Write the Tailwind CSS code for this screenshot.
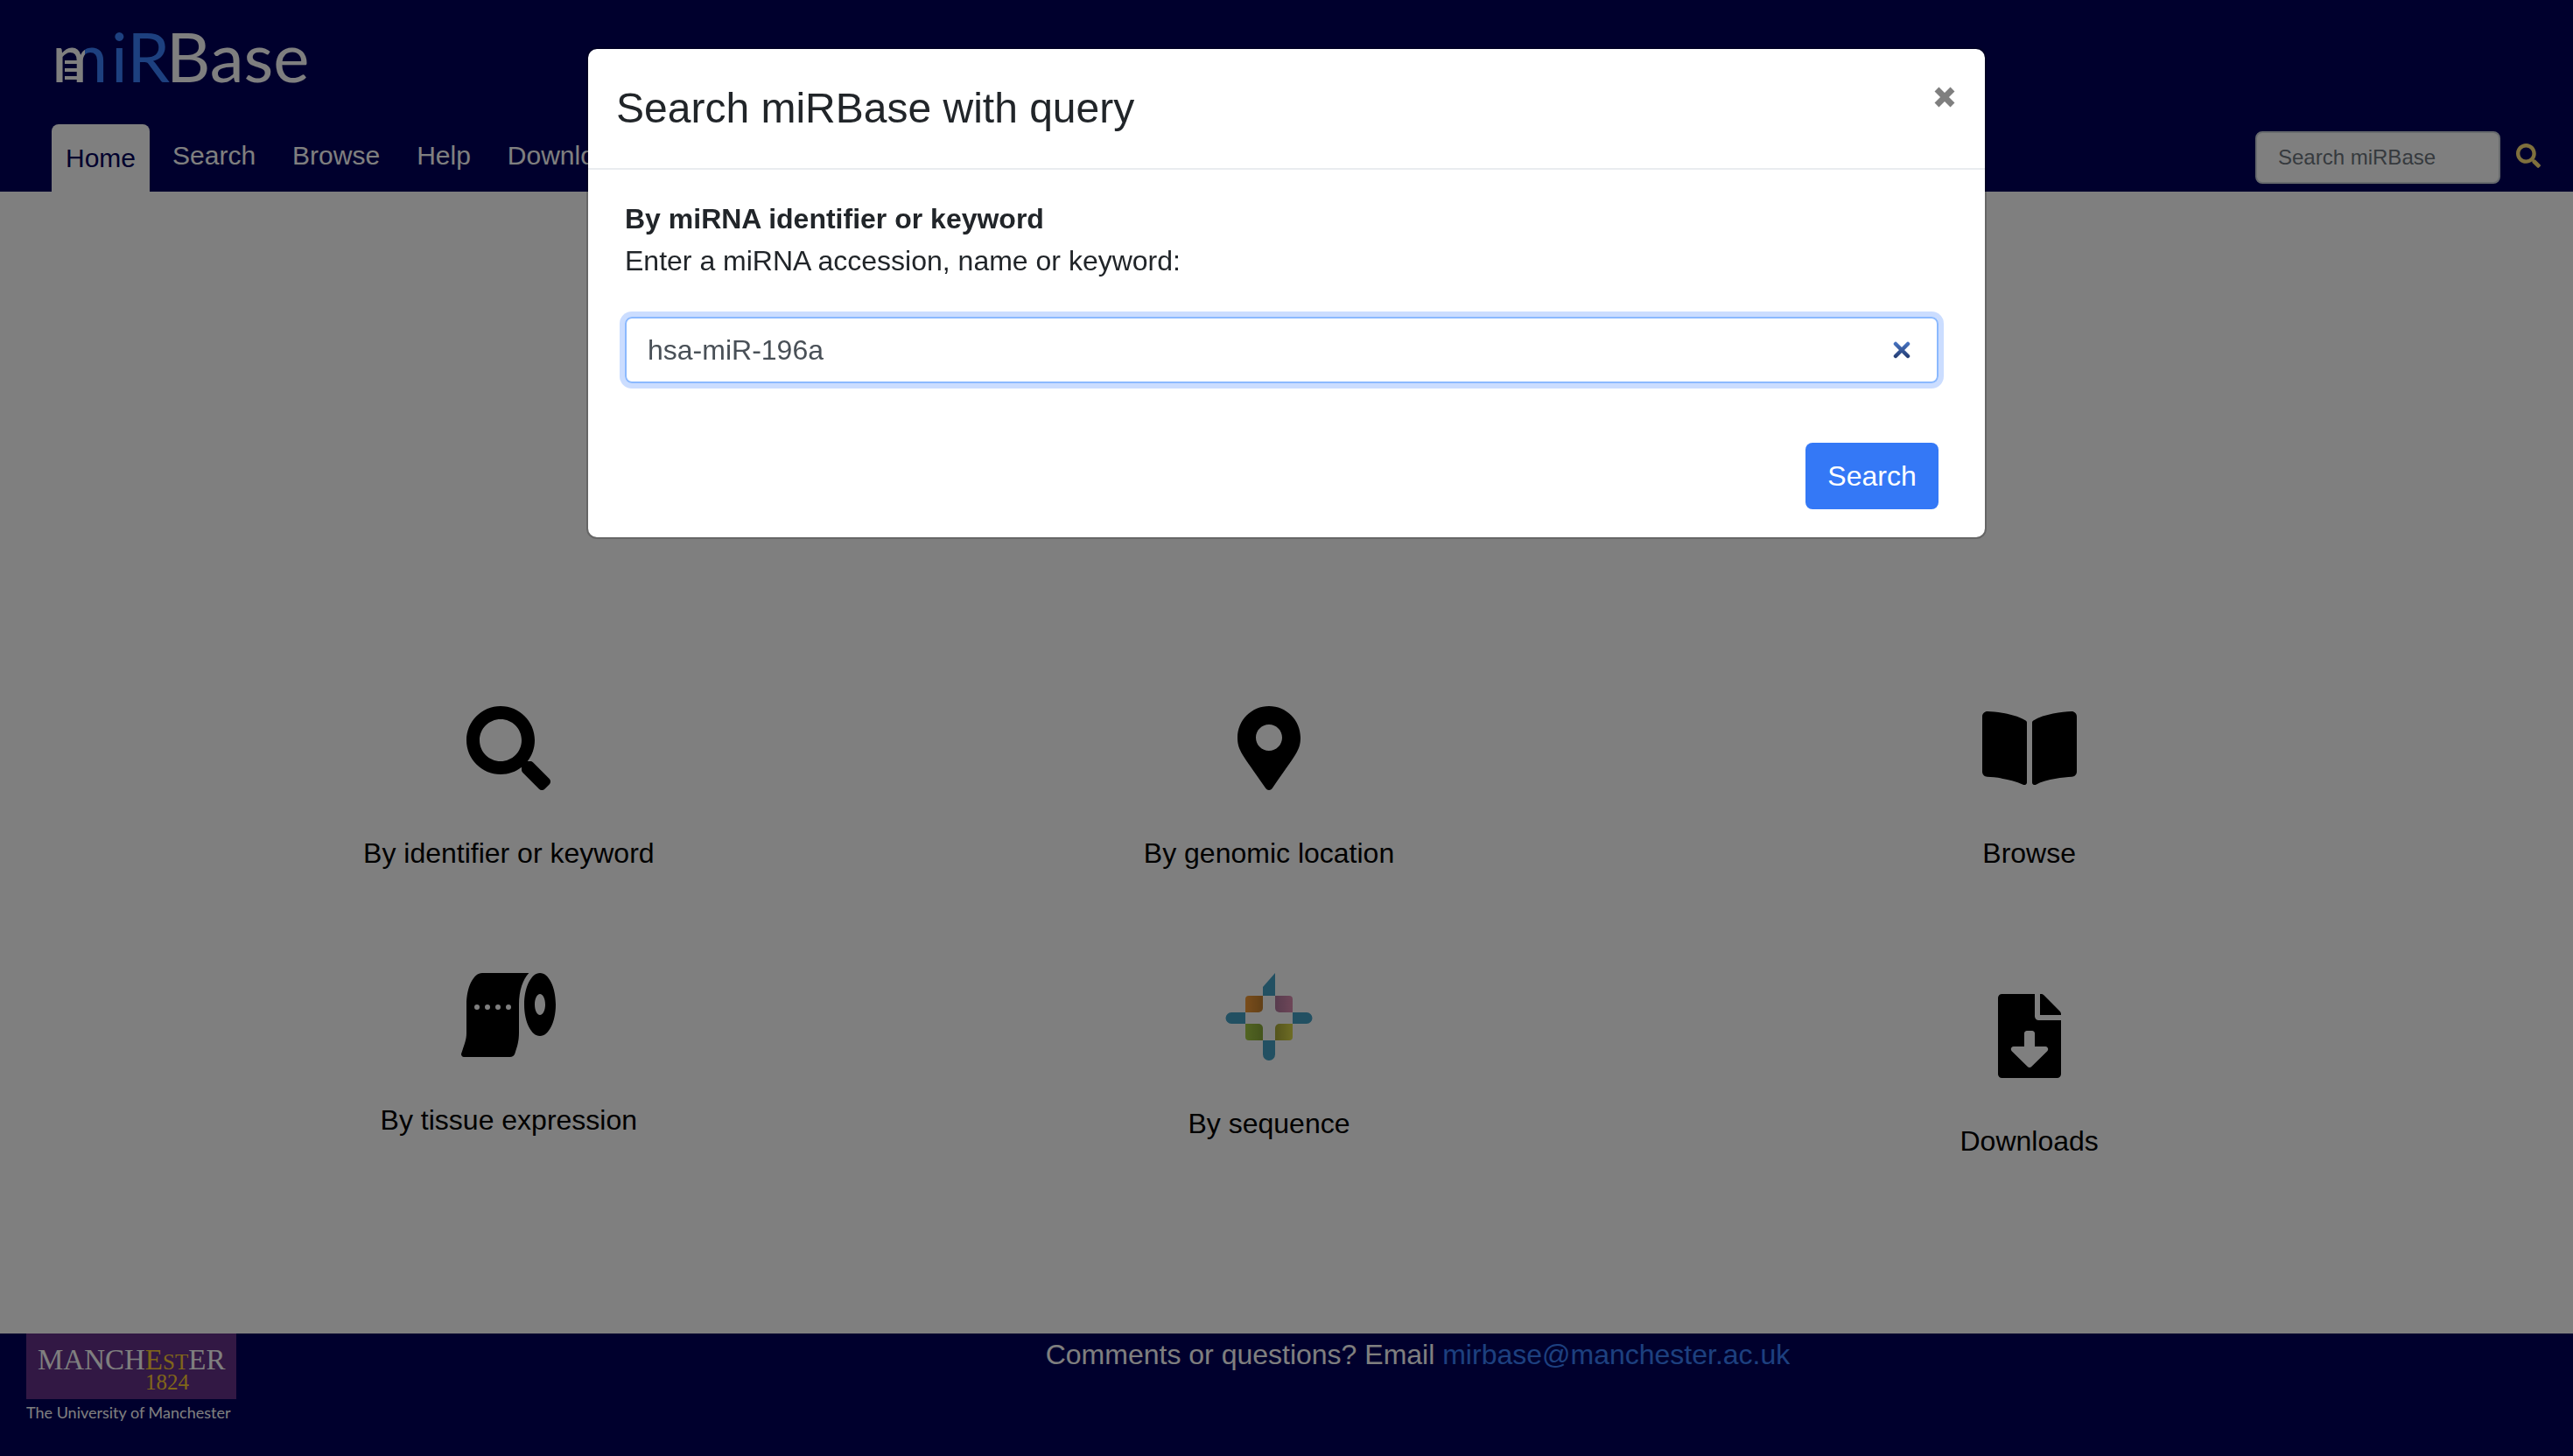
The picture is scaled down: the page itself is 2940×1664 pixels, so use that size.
<!DOCTYPE html>
<html lang="en">
<head>
<meta charset="utf-8">
<title>miRBase</title>
<script src="https://cdn.jsdelivr.net/npm/@tailwindcss/browser@4"></script>
</head>
<body class="flex min-h-screen flex-col bg-white font-['Liberation_Sans',Arial,sans-serif] text-[32px] leading-[48px] text-black">

<header class="flex h-[219px] flex-col justify-between bg-[#00005a]">
  <a href="#" class="block pt-4 pl-[59px]" aria-label="miRBase home">
    <svg class="h-[98px] w-[300px]" viewBox="0 -16 300 98" font-family="Lato, sans-serif" font-size="78">
      <defs>
        <linearGradient id="m" gradientUnits="userSpaceOnUse" x1="0" y1="0" x2="300" y2="0">
          <stop offset="0.128" stop-color="#fff"/><stop offset="0.128" stop-color="#3a80ff"/>
        </linearGradient>
      </defs>
      <text x="0" y="62" fill="url(#m)">m</text>
      <text x="68" y="62" fill="#3a80ff">iR</text>
      <text x="131" y="62" fill="#fff">Base</text>
      <path d="M15 39h14M15 48h14M15 57h14" stroke="#fff" stroke-width="4"/>
    </svg>
  </a>
  <div class="flex items-end justify-between pr-[37px] pl-[59px]">
    <nav class="flex items-end gap-[42px] text-[30px] text-white">
      <a href="#" class="-mr-4 h-[77px] rounded-t-lg bg-white px-4 pt-[15px] text-[#00005a]">Home</a>
      <a href="#" class="pb-[17px]">Search</a>
      <a href="#" class="pb-[17px]">Browse</a>
      <a href="#" class="pb-[17px]">Help</a>
      <a href="#" class="pb-[17px]">Downloads</a>
    </nav>
    <form class="flex items-center gap-[18px] pb-[9px]">
      <input type="text" aria-label="Search miRBase" placeholder="Search miRBase" class="h-[60px] w-[280px] rounded-lg border-2 border-[#ced4da] bg-white px-6 text-[24px] placeholder:text-[#6c757d]">
      <button type="button" aria-label="Search" class="pb-1 text-[#ffe07a]">
        <svg class="size-7" viewBox="0 0 512 512" fill="currentColor"><path d="M505 442.7L405.3 343c-4.500-4.500-10.600-7-17-7H372c27.600-35.300 44-79.700 44-128C416 93.100 322.900 0 208 0S0 93.100 0 208s93.100 208 208 208c48.300 0 92.700-16.400 128-44v16.300c0 6.400 2.500 12.500 7 17l99.700 99.700c9.400 9.400 24.600 9.400 33.900 0l28.300-28.300c9.400-9.400 9.400-24.600.1-34zM208 336c-70.700 0-128-57.200-128-128 0-70.700 57.200-128 128-128 70.700 0 128 57.200 128 128 0 70.700-57.200 128-128 128z"/></svg>
      </button>
    </form>
  </div>
</header>

<main class="grid flex-1 grid-cols-3 content-start pt-[588px] pr-[187px] pl-[5%]">
  <div class="flex flex-col gap-[113px]">
    <a href="#" class="flex flex-col items-center gap-12">
      <svg class="h-24" viewBox="0 0 512 512"><path d="M505 442.700L405.300 343c-4.500-4.500-10.600-7-17-7H372c27.600-35.300 44-79.700 44-128C416 93.100 322.900 0 208 0S0 93.100 0 208s93.100 208 208 208c48.300 0 92.700-16.400 128-44v16.300c0 6.400 2.500 12.500 7 17l99.700 99.700c9.400 9.400 24.600 9.400 33.900 0l28.300-28.300c9.400-9.400 9.400-24.600.1-34zM208 336c-70.700 0-128-57.200-128-128 0-70.700 57.200-128 128-128 70.700 0 128 57.200 128 128 0 70.700-57.200 128-128 128z"/></svg>
      <span>By identifier or keyword</span>
    </a>
    <a href="#" class="flex flex-col items-center gap-12">
      <svg class="h-24" viewBox="0 0 576 512"><path fill-rule="evenodd" d="M128 0C74.980 0 32 85.960 32 192v172.070c0 41.120-9.800 62.770-31.170 126.870C-2.620 501.300 5.090 512 16.010 512h280.920c13.770 0 26-8.810 30.360-21.880 12.830-38.480 24.710-72.400 24.710-126.050V192c0-83.600 23.670-153.520 60.440-192H128zM96 224a16 16 0 1 1 0-32 16 16 0 0 1 0 32zm64 0a16 16 0 1 1 0-32 16 16 0 0 1 0 32zm64 0a16 16 0 1 1 0-32 16 16 0 0 1 0 32zm64 0a16 16 0 1 1 0-32 16 16 0 0 1 0 32zM480 0c-53.020 0-96 85.960-96 192s42.980 192 96 192 96-85.960 96-192S533.020 0 480 0zm0 256c-17.670 0-32-28.650-32-64s14.330-64 32-64 32 28.650 32 64-14.330 64-32 64z"/></svg>
      <span>By tissue expression</span>
    </a>
  </div>
  <div class="flex flex-col gap-[113px]">
    <a href="#" class="flex flex-col items-center gap-12">
      <svg class="h-24" viewBox="0 0 384 512"><path d="M172.268 501.670C26.970 291.031 0 269.413 0 192 0 85.961 85.961 0 192 0s192 85.961 192 192c0 77.413-26.970 99.031-172.268 309.670-9.535 13.774-29.930 13.773-39.464 0zM192 272c44.183 0 80-35.817 80-80s-35.817-80-80-80-80 35.817-80 80 35.817 80 80 80z"/></svg>
      <span>By genomic location</span>
    </a>
    <a href="#" class="flex flex-col items-center gap-12">
      <svg class="size-[100px]" viewBox="0 0 100 100">
        <defs>
          <linearGradient id="o"><stop stop-color="#f49a36"/><stop offset="1" stop-color="#c4802e"/></linearGradient>
          <linearGradient id="p"><stop stop-color="#b0789c"/><stop offset="1" stop-color="#dc8cb0"/></linearGradient>
          <linearGradient id="g"><stop stop-color="#a4c844"/><stop offset="1" stop-color="#88a838"/></linearGradient>
          <linearGradient id="y"><stop stop-color="#a8a838"/><stop offset="1" stop-color="#dcd848"/></linearGradient>
        </defs>
        <path fill="#44a0c4" d="M43 26V16L57 0V26ZM43 77H57V93a7 7 0 0 1-14 0ZM23 45H7a6.500 6.500 0 0 0 0 13H23ZM77 45H93a6.500 6.500 0 0 1 0 13H77Z"/>
        <path fill="#fff" d="M43 26H57V45H77V58H57V77H43V58H23V45H43Z"/>
        <path fill="url(#o)" d="M27 26H43V40a5 5 0 0 1-5 5H23V30a4 4 0 0 1 4-4Z"/>
        <path fill="url(#p)" d="M57 26H73a4 4 0 0 1 4 4V45H62a5 5 0 0 1-5-5Z"/>
        <path fill="url(#g)" d="M23 58H38a5 5 0 0 1 5 5V77H27a4 4 0 0 1-4-4Z"/>
        <path fill="url(#y)" d="M62 58H77V73a4 4 0 0 1-4 4H57V63a5 5 0 0 1 5-5Z"/>
      </svg>
      <span>By sequence</span>
    </a>
  </div>
  <div class="flex flex-col gap-[137px]">
    <a href="#" class="flex flex-col items-center gap-12">
      <svg class="h-24" viewBox="0 0 576 512"><path d="M542.220 32.050c-54.800 3.110-163.720 14.430-230.960 55.590-4.640 2.840-7.270 7.890-7.270 13.170v363.870c0 11.550 12.630 18.850 23.280 13.490 69.180-34.820 169.230-44.320 218.700-46.920 16.890-.89 30.020-14.430 30.020-30.660V62.750c.01-17.710-15.350-31.740-33.770-30.700zM264.730 87.640C197.500 46.480 88.580 35.170 33.780 32.050 15.360 31.010 0 45.040 0 62.750V400.600c0 16.240 13.130 29.780 30.020 30.660 49.490 2.600 149.590 12.110 218.770 46.950 10.620 5.350 23.210-1.940 23.210-13.460V100.630c0-5.290-2.620-10.140-7.270-12.990z"/></svg>
      <span>Browse</span>
    </a>
    <a href="#" class="flex flex-col items-center gap-12">
      <svg class="h-24" viewBox="0 0 384 512"><path d="M224 136V0H24C10.700 0 0 10.700 0 24v464c0 13.300 10.700 24 24 24h336c13.300 0 24-10.700 24-24V160H248c-13.200 0-24-10.800-24-24zm76.450 211.360l-96.420 95.700c-6.650 6.610-17.390 6.610-24.040 0l-96.420-95.700C73.420 337.290 80.540 320 94.820 320H160v-80c0-8.840 7.160-16 16-16h32c8.840 0 16 7.160 16 16v80h65.180c14.280 0 21.400 17.290 11.270 27.360zM377 105L279.100 7c-4.500-4.500-10.600-7-17-7H256v128h128v-6.100c0-6.300-2.500-12.400-7-16.900z"/></svg>
      <span>Downloads</span>
    </a>
  </div>
</main>

<footer class="grid h-[140px] grid-cols-[270px_1fr] items-start bg-[#00005a] pl-[30px] text-white">
  <a href="#" aria-label="The University of Manchester">
    <svg class="h-[106px] w-60" viewBox="0 0 240 106">
      <rect width="240" height="75" fill="#643088"/>
      <text x="13" y="41" font-family="Liberation Serif, serif" font-size="33" fill="#fff">MANCH<tspan fill="#ffcc33">E<tspan font-size="25">ST</tspan></tspan>ER</text>
      <text x="136" y="64" font-family="Liberation Serif, serif" font-size="25" fill="#ffcc33">1824</text>
      <text x="0" y="97" font-family="Lato, sans-serif" font-size="18" fill="#fff">The University of Manchester</text>
    </svg>
  </a>
  <p class="text-center">Comments or questions? Email <a href="#" class="text-[#3a80ff]">mirbase@manchester.ac.uk</a></p>
</footer>

<div class="fixed inset-0 flex items-start justify-center bg-black/50 pt-[54px]">
  <section role="dialog" aria-labelledby="dialog-title" class="w-[1600px] rounded-xl border-2 border-black/20 bg-white bg-clip-padding text-[#212529]">
    <div class="flex items-start justify-between border-b-2 border-[#e9ecef] p-8">
      <h1 id="dialog-title" class="text-[48px] leading-[72px]">Search miRBase with query</h1>
      <button type="button" aria-label="Close" class="mt-[11px] mr-[2px] text-[#7f7f7f]">
        <svg class="size-6" viewBox="0 0 24 24" fill="none" stroke="currentColor" stroke-width="7"><path d="M3 3L21 21M21 3L3 21"/></svg>
      </button>
    </div>
    <form class="flex flex-col pt-8 pr-[53px] pb-8 pl-[42px]">
      <h2 class="font-bold">By miRNA identifier or keyword</h2>
      <label for="query">Enter a miRNA accession, name or keyword:</label>
      <div class="mt-10 flex h-[76px] items-center rounded-lg border-2 border-[#8bb9fe] pr-[30px] pl-6 ring-6 ring-[#cbddff]">
        <input id="query" type="text" value="hsa-miR-196a" class="flex-1 text-[#495057] outline-none">
        <button type="button" aria-label="Clear">
          <svg class="size-5" viewBox="0 0 20 20" fill="none"><defs><linearGradient id="c" gradientUnits="userSpaceOnUse" x1="0" y1="0" x2="0" y2="20"><stop stop-color="#4a78c8"/><stop offset="1" stop-color="#22386c"/></linearGradient></defs><path stroke="url(#c)" stroke-width="4.500" stroke-linecap="round" d="M3 3L17 17M17 3L3 17"/></svg>
        </button>
      </div>
      <button type="button" class="mt-[68px] h-[76px] w-[152px] self-end rounded-lg bg-[#3478f6] text-white">Search</button>
    </form>
  </section>
</div>
</body>
</html>
